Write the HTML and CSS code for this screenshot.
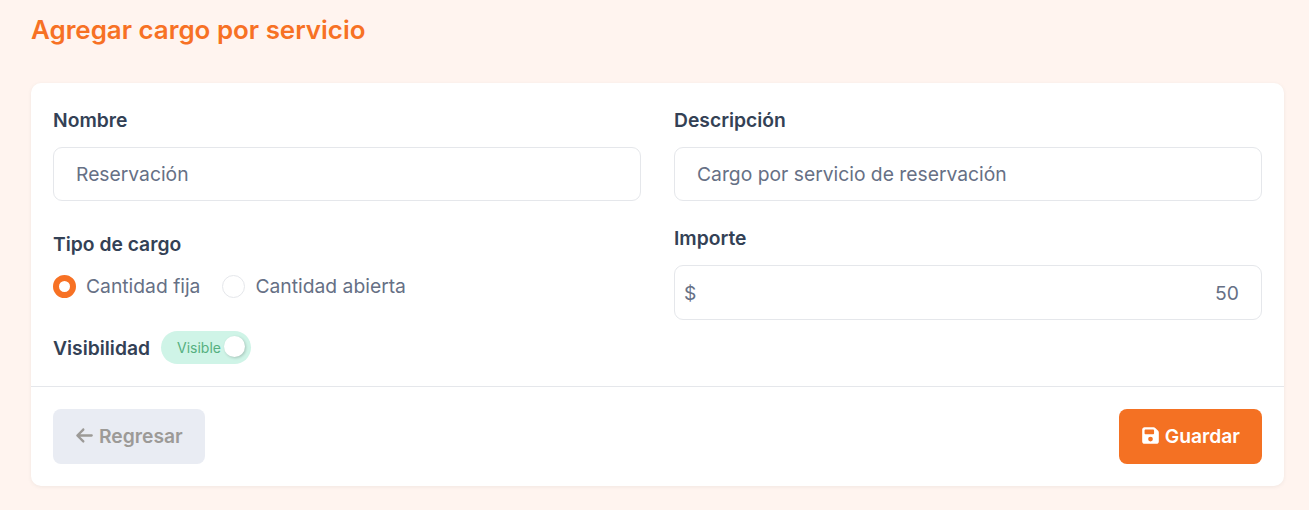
FILE: index.html
```html
<!DOCTYPE html>
<html lang="es">
<head>
    <meta charset="UTF-8">
    <meta name="viewport" content="width=device-width, initial-scale=1.0">
    <link rel="stylesheet" href="styles.css">
    <title>Agregar cargo por servicio</title>
</head>
<body>
    <h1 class="page-title">Agregar cargo por servicio</h1>
    <form class="card">
        <div class="card-body">
            <div class="column">
                <div class="field">
                    <label class="field-label">Nombre</label>
                    <input class="text-input" type="text" value="Reservación">
                </div>
                <div class="field field-type">
                    <span class="field-label">Tipo de cargo</span>
                    <div class="radio-group">
                        <label class="radio-option"><span class="radio radio-checked"></span>Cantidad fija</label>
                        <label class="radio-option"><span class="radio"></span>Cantidad abierta</label>
                    </div>
                </div>
                <div class="visibility">
                    <span class="field-label">Visibilidad</span>
                    <span class="switch">
                        <span class="switch-text">Visible</span>
                        <span class="switch-knob"></span>
                    </span>
                </div>
            </div>
            <div class="column">
                <div class="field">
                    <label class="field-label">Descripción</label>
                    <input class="text-input" type="text" value="Cargo por servicio de reservación">
                </div>
                <div class="field field-amount">
                    <label class="field-label">Importe</label>
                    <div class="amount-input">
                        <span class="amount-prefix">$</span>
                        <span class="amount-value">50</span>
                    </div>
                </div>
            </div>
        </div>
        <div class="card-footer">
            <button class="btn btn-back" type="button">
                <svg class="btn-icon" viewBox="0 0 448 512"><path fill="currentColor" d="M9.4 233.4c-12.5 12.5-12.5 32.8 0 45.3l160 160c12.5 12.5 32.8 12.5 45.3 0s12.5-32.8 0-45.3L109.2 288 416 288c17.7 0 32-14.3 32-32s-14.3-32-32-32l-306.7 0L214.6 118.6c12.5-12.5 12.5-32.8 0-45.3s-32.8-12.5-45.3 0l-160 160z"/></svg>
                Regresar
            </button>
            <button class="btn btn-save" type="button">
                <svg class="btn-icon" viewBox="0 0 448 512"><path fill="currentColor" d="M64 32C28.7 32 0 60.7 0 96V416c0 35.3 28.7 64 64 64H384c35.3 0 64-28.7 64-64V173.3c0-17-6.7-33.3-18.7-45.3L352 50.7C340 38.7 323.7 32 306.7 32H64zm0 96c0-17.7 14.3-32 32-32H288c17.7 0 32 14.3 32 32v64c0 17.7-14.3 32-32 32H96c-17.7 0-32-14.3-32-32V128zM224 288a64 64 0 1 1 0 128 64 64 0 1 1 0-128z"/></svg>
                Guardar
            </button>
        </div>
    </form>
</body>
</html>
```

FILE: styles.css
```css
* {
    box-sizing: border-box;
}

body {
    margin: 0;
    padding: 0 25px 24px 31px;
    background-color: #fff4ef;
    font-family: Inter, 'Noto Sans', sans-serif;
    color: #334155;
}

.page-title {
    margin: 0 0 36px;
    padding-top: 13px;
    font-size: 25.9px;
    line-height: 34px;
    font-weight: 600;
    color: #f77124;
}

.card {
    background-color: #fff;
    border-radius: 10px;
    box-shadow: 0 1px 4px rgba(0, 0, 0, 0.06);
}

.card-body {
    display: grid;
    grid-template-columns: 1fr 1fr;
    column-gap: 33px;
    height: 304px;
    padding: 25px 22px 0;
    border-bottom: 1px solid #e5e7eb;
}

.field-label {
    display: block;
    font-size: 19.3px;
    line-height: 24px;
    font-weight: 600;
    color: #334155;
}

.text-input {
    display: block;
    width: 100%;
    height: 54px;
    margin-top: 15px;
    padding: 0 22px;
    border: 1px solid #e5e7eb;
    border-radius: 9px;
    outline: none;
    font-family: inherit;
    font-size: 19.3px;
    color: #667085;
}

.field-type {
    margin-top: 31px;
}

.radio-group {
    display: flex;
    gap: 22px;
    margin-top: 18px;
}

.radio-option {
    display: flex;
    align-items: center;
    gap: 10px;
    font-size: 19.3px;
    line-height: 24px;
    color: #667085;
}

.radio {
    width: 23px;
    height: 23px;
    border: 1px solid #e5e7eb;
    border-radius: 50%;
    background-color: #fff;
}

.radio-checked {
    border: 6px solid #f77124;
}

.visibility {
    display: flex;
    align-items: center;
    gap: 11px;
    margin-top: 33px;
}

.switch {
    position: relative;
    display: block;
    width: 90px;
    height: 33px;
    border-radius: 17px;
    background-color: #cff4e7;
}

.switch-text {
    display: block;
    padding-left: 16px;
    font-size: 14px;
    line-height: 33px;
    color: #55b07f;
}

.switch-knob {
    position: absolute;
    top: 5px;
    right: 6px;
    width: 21px;
    height: 21px;
    border-radius: 50%;
    background-color: #fff;
    box-shadow: 1px 1px 3px rgba(0, 0, 0, 0.2);
}

.field-amount {
    margin-top: 25px;
}

.amount-input {
    display: flex;
    align-items: center;
    justify-content: space-between;
    height: 55px;
    margin-top: 15px;
    padding: 0 22px 0 9px;
    border: 1px solid #e5e7eb;
    border-radius: 9px;
    font-size: 19.3px;
    color: #667085;
}

.card-footer {
    display: flex;
    justify-content: space-between;
    padding: 22px 22px;
}

.btn {
    display: flex;
    align-items: center;
    gap: 6px;
    height: 55px;
    padding: 0 22px 2px 23px;
    border: none;
    border-radius: 8px;
    font-family: inherit;
    font-size: 19.3px;
    font-weight: 600;
}

.btn-icon {
    width: 17px;
    height: 19px;
}

.btn-back {
    background-color: #e9ecf3;
    color: #9c9a97;
}

.btn-save {
    background-color: #f47123;
    color: #fff;
}
```
